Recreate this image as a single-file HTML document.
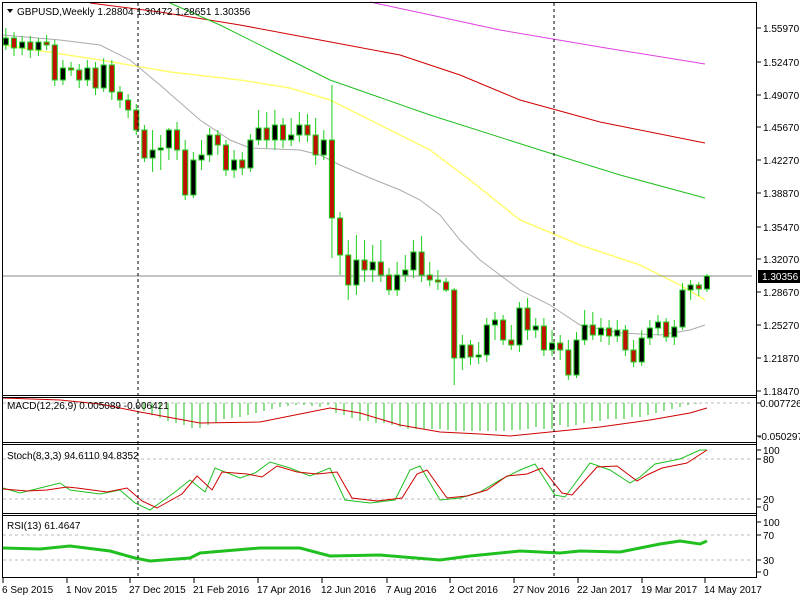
<!DOCTYPE html>
<html><head><meta charset="utf-8"><style>
html,body{margin:0;padding:0;background:#fff;width:800px;height:600px;overflow:hidden}
svg text{font-family:"Liberation Sans",sans-serif;font-size:10px;fill:#000}
</style></head><body>
<svg width="800" height="600" xmlns="http://www.w3.org/2000/svg">
<rect width="800" height="600" fill="#fff"/>
<g stroke="#bbb" stroke-dasharray="3,3">
<line x1="3" y1="403" x2="752" y2="403"/><line x1="3" y1="459" x2="752" y2="459"/><line x1="3" y1="499" x2="752" y2="499"/><line x1="3" y1="535" x2="752" y2="535"/><line x1="3" y1="560" x2="752" y2="560"/>
</g>
<g fill="none">
<polyline stroke="#e040e0" points="370,2 440,17 500,30 600,47 705,64"/>
<polyline stroke="#d00000" points="90,3 160,12 240,25 320,40 400,55 460,75 520,100 600,122 705,143"/>
<polyline stroke="#20c020" points="170,3 220,25 280,55 330,80 430,115 540,150 620,175 705,198"/>
<polyline stroke="#ffff70" stroke-width="1.5" points="3,45 100,60 170,72 240,80 290,88 330,100 380,125 430,150 470,180 520,220 580,245 640,265 680,285 705,300"/>
<polyline stroke="#aaa" points="3,35 60,40 100,45 130,60 160,85 200,120 230,140 250,148 300,150 320,155 340,165 370,178 400,190 420,200 440,215 460,240 480,260 500,275 520,290 550,305 580,325 620,333 660,335 690,330 705,325"/>
</g>
<line x1="3" y1="276" x2="752" y2="276" stroke="#888"/>
<svg x="3" y="0" width="750" height="395" overflow="hidden">
<g transform="translate(-5.3 0) scale(1.019 1)">
<path fill="none" stroke="#20d020" d="M0 33V78M8 28V50M16 32V56M24 36V55M32 36V58M40 38V56M48 35V50M56 40V86M64 60V85M72 62V76M80 64V88M88 60V86M96 62V95M104 58V92M112 60V100M120 86V108M128 94V118M136 104V135M144 125V162M152 130V172M160 135V170M168 128V160M176 122V160M184 140V200M192 152V198M200 140V170M208 128V162M216 130V155M224 140V176M232 150V178M240 152V175M248 134V172M256 110V145M264 112V148M272 110V150M280 118V148M288 118V146M296 112V142M304 114V142M312 118V165M320 130V160M328 85V258M336 212V275M344 240V300M352 235V295M360 240V282M368 245V282M376 240V282M384 268V295M392 262V296M400 255V282M408 240V278M416 236V282M424 262V286M432 270V290M440 278V292M448 288V385M456 335V370M464 340V365M472 342V364M480 318V362M488 312V340M496 315V345M504 325V350M512 302V352M520 298V340M528 318V338M536 318V356M544 330V356M552 335V360M560 340V380M568 332V378M576 310V345M584 312V340M592 318V342M600 320V345M608 320V342M616 325V356M624 340V367M632 330V366M640 320V345M648 315V335M656 318V342M664 320V345M672 283V330M680 280V300M688 282V296M696 274V292"/>
<g fill="#000" stroke="#20d020">
<rect x="-2.5" y="45" width="5" height="25"/><rect x="5.5" y="38" width="5" height="7"/><rect x="21.5" y="42" width="5" height="6"/><rect x="37.5" y="42" width="5" height="8"/><rect x="61.5" y="68" width="5" height="12"/><rect x="85.5" y="68" width="5" height="12"/><rect x="101.5" y="65" width="5" height="23"/><rect x="149.5" y="150" width="5" height="8"/><rect x="157.5" y="148" width="5" height="2"/><rect x="165.5" y="130" width="5" height="18"/><rect x="189.5" y="160" width="5" height="35"/><rect x="197.5" y="155" width="5" height="5"/><rect x="205.5" y="135" width="5" height="20"/><rect x="229.5" y="160" width="5" height="10"/><rect x="245.5" y="140" width="5" height="28"/><rect x="253.5" y="128" width="5" height="12"/><rect x="269.5" y="125" width="5" height="15"/><rect x="285.5" y="135" width="5" height="5"/><rect x="293.5" y="125" width="5" height="10"/><rect x="317.5" y="140" width="5" height="15"/><rect x="349.5" y="260" width="5" height="25"/><rect x="365.5" y="262" width="5" height="8"/><rect x="389.5" y="275" width="5" height="15"/><rect x="397.5" y="270" width="5" height="5"/><rect x="405.5" y="252" width="5" height="18"/><rect x="453.5" y="345" width="5" height="13"/><rect x="469.5" y="355" width="5" height="2"/><rect x="477.5" y="325" width="5" height="30"/><rect x="485.5" y="320" width="5" height="5"/><rect x="509.5" y="308" width="5" height="37"/><rect x="525.5" y="326" width="5" height="4"/><rect x="541.5" y="343" width="5" height="7"/><rect x="565.5" y="340" width="5" height="35"/><rect x="573.5" y="325" width="5" height="15"/><rect x="589.5" y="328" width="5" height="7"/><rect x="605.5" y="330" width="5" height="6"/><rect x="629.5" y="338" width="5" height="24"/><rect x="637.5" y="328" width="5" height="10"/><rect x="645.5" y="322" width="5" height="6"/><rect x="661.5" y="327" width="5" height="10"/><rect x="669.5" y="290" width="5" height="37"/><rect x="677.5" y="285" width="5" height="5"/><rect x="693.5" y="276" width="5" height="13"/>
</g>
<g fill="#c01000" stroke="#20d020">
<rect x="13.5" y="38" width="5" height="10"/><rect x="29.5" y="42" width="5" height="8"/><rect x="45.5" y="42" width="5" height="3"/><rect x="53.5" y="45" width="5" height="35"/><rect x="69.5" y="68" width="5" height="2"/><rect x="77.5" y="70" width="5" height="10"/><rect x="93.5" y="68" width="5" height="20"/><rect x="109.5" y="65" width="5" height="27"/><rect x="117.5" y="92" width="5" height="8"/><rect x="125.5" y="100" width="5" height="10"/><rect x="133.5" y="110" width="5" height="20"/><rect x="141.5" y="130" width="5" height="28"/><rect x="173.5" y="130" width="5" height="20"/><rect x="181.5" y="150" width="5" height="45"/><rect x="213.5" y="135" width="5" height="10"/><rect x="221.5" y="145" width="5" height="25"/><rect x="237.5" y="160" width="5" height="8"/><rect x="261.5" y="128" width="5" height="12"/><rect x="277.5" y="125" width="5" height="15"/><rect x="301.5" y="125" width="5" height="10"/><rect x="309.5" y="135" width="5" height="20"/><rect x="325.5" y="140" width="5" height="78"/><rect x="333.5" y="218" width="5" height="37"/><rect x="341.5" y="255" width="5" height="30"/><rect x="357.5" y="260" width="5" height="10"/><rect x="373.5" y="262" width="5" height="13"/><rect x="381.5" y="275" width="5" height="15"/><rect x="413.5" y="252" width="5" height="23"/><rect x="421.5" y="275" width="5" height="5"/><rect x="429.5" y="280" width="5" height="2"/><rect x="437.5" y="282" width="5" height="8"/><rect x="445.5" y="290" width="5" height="68"/><rect x="461.5" y="345" width="5" height="12"/><rect x="493.5" y="320" width="5" height="20"/><rect x="501.5" y="340" width="5" height="5"/><rect x="517.5" y="308" width="5" height="22"/><rect x="533.5" y="326" width="5" height="24"/><rect x="549.5" y="343" width="5" height="7"/><rect x="557.5" y="350" width="5" height="25"/><rect x="581.5" y="325" width="5" height="10"/><rect x="597.5" y="328" width="5" height="8"/><rect x="613.5" y="330" width="5" height="20"/><rect x="621.5" y="350" width="5" height="12"/><rect x="653.5" y="322" width="5" height="15"/><rect x="685.5" y="285" width="5" height="4"/>
</g>
</g>
</svg>
<!-- MACD -->
<path fill="none" stroke="#20c020" d="M144 403v8M152 403v12M160 403v15M168 403v18M176 403v20M184 403v22M192 403v25M200 403v25M208 403v22M216 403v20M224 403v16M232 403v15M240 403v14M248 403v12M256 403v10M264 403v8M272 403v6M280 403v4M288 403v3M296 403v2M304 403v2M312 403v3M320 403v4M328 403v2M336 403v10M344 403v12M352 403v15M360 403v18M368 403v18M376 403v20M384 403v20M392 403v22M400 403v24M408 403v26M416 403v26M424 403v26M432 403v26M440 403v26M448 403v27M456 403v28M464 403v28M472 403v28M480 403v28M488 403v28M496 403v28M504 403v28M512 403v27M520 403v27M528 403v26M536 403v24M544 403v26M552 403v26M560 403v22M568 403v24M576 403v22M584 403v20M592 403v18M600 403v18M608 403v16M616 403v16M624 403v16M632 403v14M640 403v14M648 403v12M656 403v10M664 403v8M672 403v6M680 403v4M688 403v2M696 403v1"/>
<polyline fill="none" stroke="#d00000" points="3,398 60,400 100,404 140,412 200,423 260,422 300,414 330,408 360,413 400,425 440,432 480,434 510,436 550,432 600,427 650,420 690,413 707,408"/>
<!-- Stoch -->
<polyline fill="none" stroke="#20c020" points="3,488 20,493 40,488 60,483 70,490 100,494 120,490 135,503 150,510 175,492 190,480 205,492 215,468 240,478 255,473 270,462 290,468 310,476 330,468 345,500 370,503 395,500 410,470 420,466 440,500 460,498 480,492 500,480 520,470 535,464 555,495 565,497 590,463 610,470 630,483 640,477 655,464 680,459 700,450 707,450"/>
<polyline fill="none" stroke="#d00000" points="3,489 27,491 47,490 67,487 77,488 107,492 127,488 142,501 157,508 182,494 197,476 212,490 222,472 247,474 262,477 277,466 297,472 317,474 337,472 352,498 377,501 402,498 417,474 427,470 447,498 467,496 487,490 507,476 527,474 542,468 562,493 572,495 597,467 617,466 637,481 647,475 662,468 687,463 707,450"/>
<!-- RSI -->
<polyline fill="none" stroke="#20c020" stroke-width="3" points="3,548 40,549 70,546 110,551 135,558 150,561 190,558 200,553 260,548 300,548 330,556 380,555 440,560 470,556 520,551 560,553 580,551 620,552 640,548 660,544 680,541 700,544 707,541"/>
<g stroke="#000" stroke-dasharray="3,3"><line x1="138" y1="3" x2="138" y2="578"/><line x1="554" y1="3" x2="554" y2="578"/></g>
<rect x="2.5" y="2.5" width="754" height="575" fill="none" stroke="#000"/>
<g stroke="#000"><line x1="2" y1="395.5" x2="757" y2="395.5"/><line x1="2" y1="397.5" x2="757" y2="397.5"/><line x1="2" y1="442.5" x2="757" y2="442.5"/><line x1="2" y1="444.5" x2="757" y2="444.5"/><line x1="2" y1="513.5" x2="757" y2="513.5"/><line x1="2" y1="515.5" x2="757" y2="515.5"/></g>
<path stroke="#000" d="M757 28h4M757 62h4M757 95h4M757 127h4M757 160h4M757 193h4M757 227h4M757 259h4M757 292h4M757 325h4M757 358h4M757 391h4M757 403h4M757 436h4M757 450h4M757 459h4M757 499h4M757 507h4M757 522h4M757 535h4M757 560h4M757 572h4M3 578v5M67 578v5M130 578v5M194 578v5M258 578v5M322 578v5M387 578v5M450 578v5M514 578v5M578 578v5M642 578v5M705 578v5"/>
<text x="763" y="32">1.55970</text><text x="763" y="66">1.52470</text><text x="763" y="99">1.49070</text><text x="763" y="131">1.45670</text><text x="763" y="164">1.42270</text><text x="763" y="197">1.38870</text><text x="763" y="231">1.35470</text><text x="763" y="263">1.32070</text><text x="763" y="296">1.28670</text><text x="763" y="329">1.25270</text><text x="763" y="362">1.21870</text><text x="763" y="395">1.18470</text>
<rect x="758" y="270" width="42" height="13" fill="#000"/><text x="762" y="280" style="fill:#fff">1.30356</text>
<text x="760" y="407">0.007726</text><text x="758" y="440">-0.050297</text>
<text x="763" y="454">100</text><text x="763" y="463">80</text><text x="763" y="503">20</text><text x="763" y="511">0</text>
<text x="763" y="526">100</text><text x="763" y="539">70</text><text x="763" y="564">30</text><text x="763" y="576">0</text>
<text x="2" y="593">6 Sep 2015</text><text x="66" y="593">1 Nov 2015</text><text x="129" y="593">27 Dec 2015</text><text x="193" y="593">21 Feb 2016</text><text x="257" y="593">17 Apr 2016</text><text x="321" y="593">12 Jun 2016</text><text x="386" y="593">7 Aug 2016</text><text x="449" y="593">2 Oct 2016</text><text x="513" y="593">27 Nov 2016</text><text x="577" y="593">22 Jan 2017</text><text x="641" y="593">19 Mar 2017</text><text x="704" y="593">14 May 2017</text>
<polygon points="7,9 13,9 10,13" fill="#000"/>
<text x="17" y="15">GBPUSD,Weekly  1.28804 1.30472 1.28651 1.30356</text>
<text x="7" y="409">MACD(12,26,9) 0.005089 -0.006421</text>
<text x="7" y="459">Stoch(8,3,3) 94.6110 94.8352</text>
<text x="7" y="529">RSI(13) 61.4647</text>
</svg>
</body></html>
